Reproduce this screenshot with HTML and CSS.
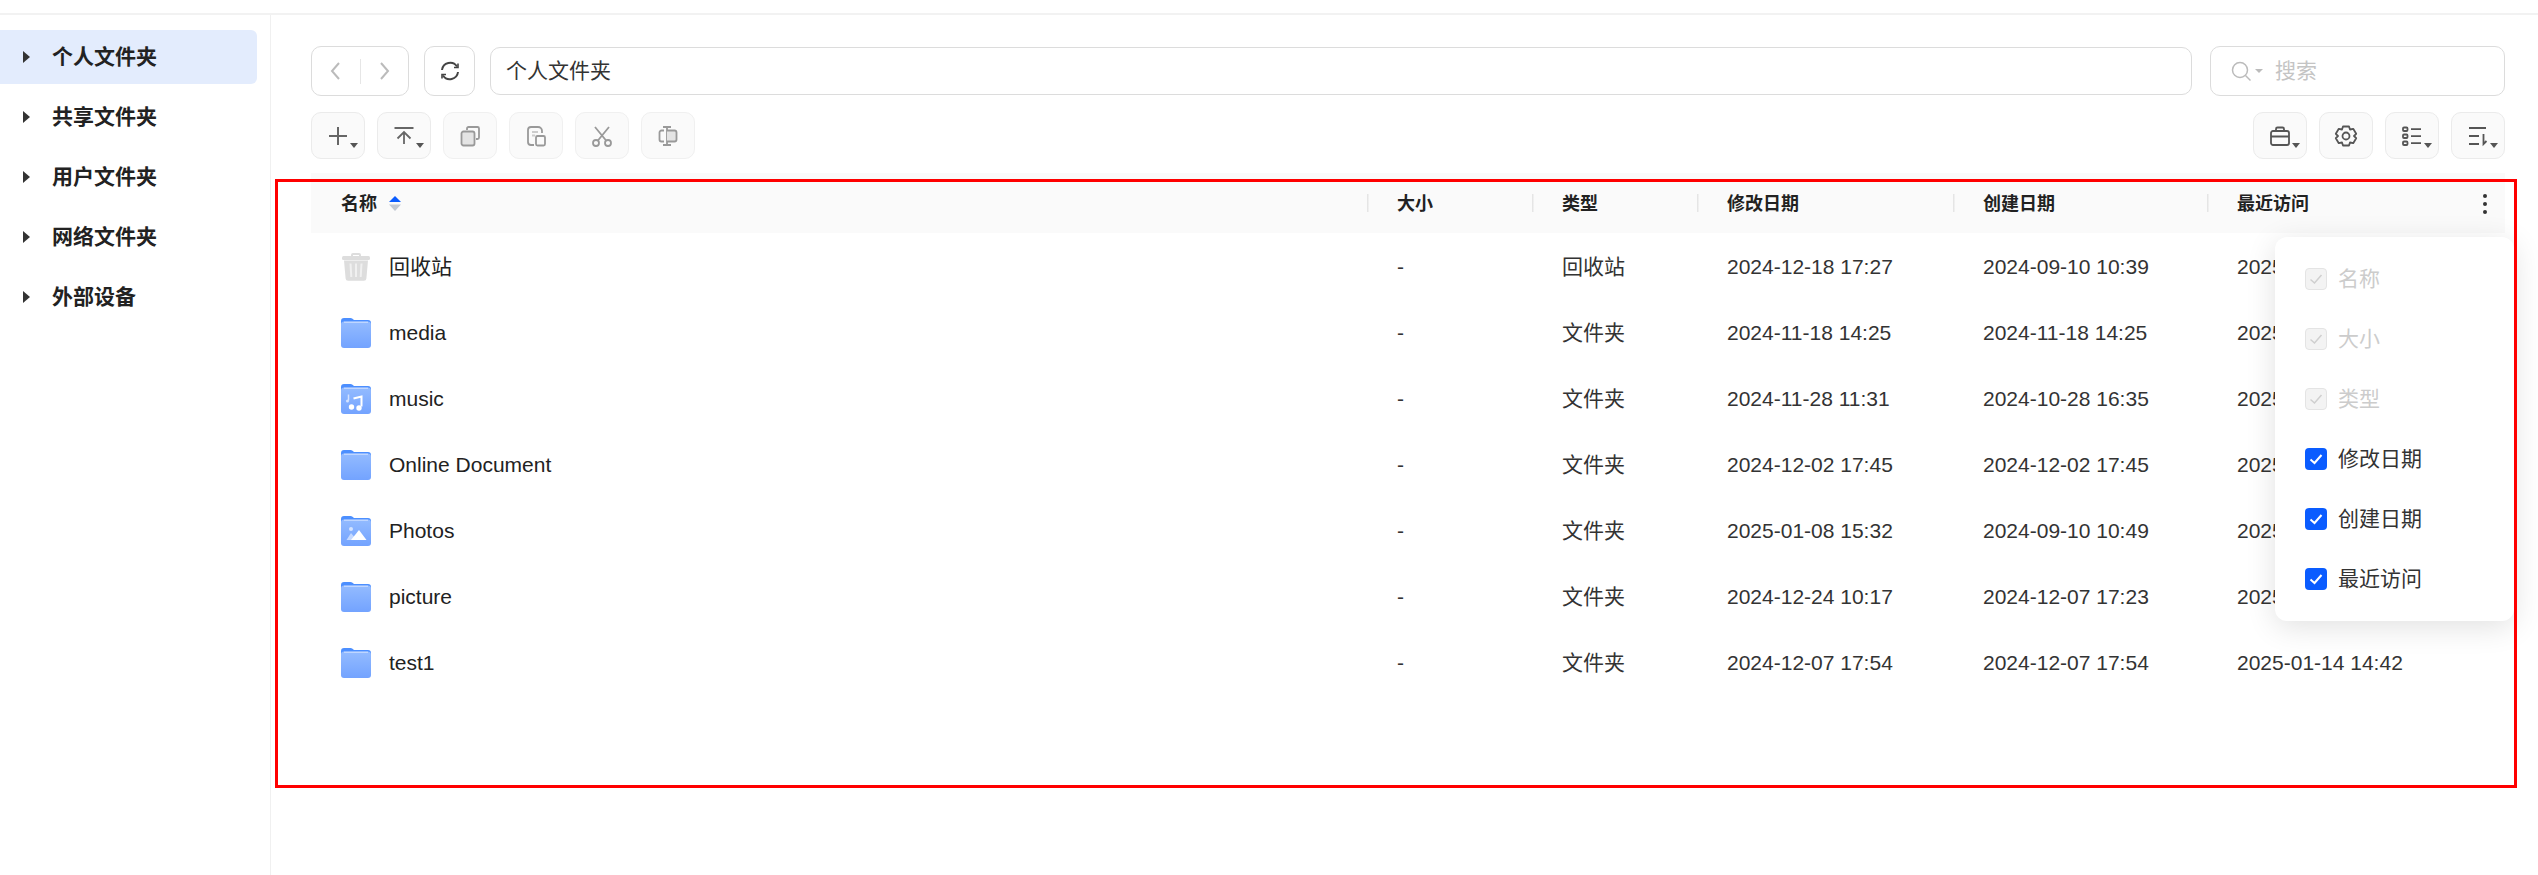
FILE: index.html
```html
<!DOCTYPE html>
<html lang="zh">
<head>
<meta charset="utf-8">
<title>文件管理</title>
<link rel="stylesheet" href="styles.css">
</head>
<body>
<svg class="defs" width="0" height="0" aria-hidden="true">
  <defs>
    <linearGradient id="fg" x1="0" y1="0" x2="0" y2="1"><stop offset="0" stop-color="#93bbff"/><stop offset="1" stop-color="#73a3ff"/></linearGradient>
    <symbol id="folder" viewBox="0 0 30 30">
      <path d="M0 3a3 3 0 0 1 3-3h6.500a3 3 0 0 1 2 .8L13 2h14a3 3 0 0 1 3 3v8H0z" fill="#4c8fff"/>
      <rect y="3.500" width="30" height="26.500" rx="3" fill="url(#fg)"/>
      <path d="M3 4.200h24" stroke="#d4e3ff" stroke-width="1"/>
    </symbol>
  </defs>
</svg>
<div class="topbar"></div>
<div class="app">
  <nav class="sidebar">
    <div class="nav-item active"><i class="nav-caret"></i>个人文件夹</div>
    <div class="nav-item"><i class="nav-caret"></i>共享文件夹</div>
    <div class="nav-item"><i class="nav-caret"></i>用户文件夹</div>
    <div class="nav-item"><i class="nav-caret"></i>网络文件夹</div>
    <div class="nav-item"><i class="nav-caret"></i>外部设备</div>
  </nav>
  <main class="main">
    <div class="pathbar">
      <div class="nav-group">
        <button class="nav-half"><svg width="24" height="24" viewBox="0 0 24 24" fill="none" stroke="#bbb" stroke-width="2"><path d="M15 4l-7 8 7 8"/></svg></button>
        <span class="nav-sep"></span>
        <button class="nav-half"><svg width="24" height="24" viewBox="0 0 24 24" fill="none" stroke="#bbb" stroke-width="2"><path d="M9 4l7 8-7 8"/></svg></button>
      </div>
      <button class="refresh"><svg width="24" height="24" viewBox="0 0 24 24" fill="none" stroke="#444" stroke-width="2"><path d="M4 11a8.200 8.200 0 0 1 15-3.500M20 13a8.200 8.200 0 0 1-15 3.500"/><path d="M20 4.500v4h-4M4 19.500v-4h4" stroke-width="1.600"/></svg></button>
      <div class="address">个人文件夹</div>
      <div class="search">
        <svg width="20" height="20" viewBox="0 0 20 20" fill="none" stroke="#bbb" stroke-width="1.500"><circle cx="9" cy="9" r="7.500"/><path d="M14.500 14.500l5 5"/></svg>
        <i class="search-caret"></i>
        <span>搜索</span>
      </div>
    </div>
    <div class="toolbar">
      <div class="tool-group">
        <button class="tool strong"><svg width="24" height="24" viewBox="0 0 24 24" fill="none" stroke="#666" stroke-width="2"><path d="M12 3v18M3 12h18"/></svg></button>
        <button class="tool strong"><svg width="24" height="24" viewBox="0 0 24 24" fill="none" stroke="#666" stroke-width="1.800"><path d="M2.500 4h19M12 20V8M5.500 14.500L12 8l6.500 6.500"/></svg></button>
        <button class="tool"><svg width="24" height="24" viewBox="0 0 24 24" fill="none" stroke="#999" stroke-width="1.800"><path d="M9 6V4.500A1.500 1.500 0 0 1 10.500 3h9A1.500 1.500 0 0 1 21 4.500v9a1.500 1.500 0 0 1-1.500 1.500H18"/><rect x="3.500" y="7.500" width="13" height="14" rx="2" fill="#e4e4e4"/></svg></button>
        <button class="tool"><svg width="24" height="24" viewBox="0 0 24 24" fill="none" stroke="#999" stroke-width="1.800"><path d="M10 21H7a3 3 0 0 1-3-3V6a3 3 0 0 1 3-3h7a4 4 0 0 1 4 4v2"/><path d="M8 8h6M8 11.500h3" stroke="#ccc"/><rect x="12" y="12" width="9" height="9.500" rx="1.500"/></svg></button>
        <button class="tool"><svg width="24" height="24" viewBox="0 0 24 24" fill="none" stroke="#999" stroke-width="1.800"><path d="M5 3l11.500 14M19 3L7.500 17"/><circle cx="6" cy="19" r="3"/><circle cx="18" cy="19" r="3"/></svg></button>
        <button class="tool"><svg width="24" height="24" viewBox="0 0 24 24" fill="none" stroke="#999" stroke-width="1.800"><path d="M7 3h8M7 21h8M11 3v18"/><path d="M8 6.500H5.500a2 2 0 0 0-2 2v7a2 2 0 0 0 2 2H8"/><path d="M11 6.500h7.500a2 2 0 0 1 2 2v7a2 2 0 0 1-2 2H11" fill="#e4e4e4"/></svg></button>
      </div>
      <div class="tool-group">
        <button class="tool strong"><svg width="24" height="24" viewBox="0 0 24 24" fill="none" stroke="#555" stroke-width="1.800"><rect x="3" y="7" width="18" height="14" rx="2"/><path d="M8 7V5a1.500 1.500 0 0 1 1.500-1.500h5A1.500 1.500 0 0 1 16 5v2M3 12.500h18"/></svg></button>
        <button class="tool plain"><svg width="24" height="24" viewBox="0 0 24 24" fill="none" stroke="#555" stroke-width="1.800"><path d="M9 2.500h6l1 3 3.200-.7 3 5L20 12l2.200 2.200-3 5-3.200-.7-1 3H9l-1-3-3.200.7-3-5L4 12 1.800 9.800l3-5L8 5.500z" stroke-linejoin="round"/><circle cx="12" cy="12" r="3.500"/></svg></button>
        <button class="tool strong"><svg width="24" height="24" viewBox="0 0 24 24" fill="none" stroke="#555" stroke-width="1.800"><rect x="3" y="3.500" width="4.500" height="3.500" rx="1"/><rect x="3" y="10.500" width="4.500" height="3.500" rx="1"/><rect x="3" y="17.500" width="4.500" height="3.500" rx="1"/><path d="M11 5.200h10M11 12.200h10M11 19.200h10"/></svg></button>
        <button class="tool strong"><svg width="24" height="24" viewBox="0 0 24 24" fill="none" stroke="#555" stroke-width="1.800"><path d="M3 4h17M3 12h10M3 20h10M17.500 10v10l3-3"/></svg></button>
      </div>
    </div>
    <div class="table">
      <div class="row head">
        <div class="cell first">名称<svg class="sorter" width="12" height="16" viewBox="0 0 12 16"><path d="M6 0l6 6H0z" fill="#0a5cff"/><path d="M0 8.500h12l-6 6.500z" fill="#c2c8d2"/></svg></div>
        <div class="cell">大小</div>
        <div class="cell">类型</div>
        <div class="cell">修改日期</div>
        <div class="cell">创建日期</div>
        <div class="cell last">最近访问<span class="kebab"><i></i><i></i><i></i></span></div>
      </div>
      <div class="row">
        <div class="cell first"><svg class="file-icon trash" width="30" height="30" viewBox="0 0 30 30"><path d="M11 4V3a1 1 0 0 1 1-1h6a1 1 0 0 1 1 1v1" fill="none" stroke="#ddd" stroke-width="2"/><rect x="1" y="4" width="28" height="4" rx="1.500" fill="#ddd"/><path d="M3 8.500h24l-1.600 18a2.500 2.500 0 0 1-2.500 2.200H7.100a2.500 2.500 0 0 1-2.500-2.200z" fill="#ddd"/><path d="M9.500 11.500l.8 13.500M15 11.500V25M20.500 11.500l-.8 13.500" stroke="#f0f0f0" stroke-width="2"/></svg>回收站</div>
        <div class="cell">-</div><div class="cell">回收站</div><div class="cell">2024-12-18 17:27</div><div class="cell">2024-09-10 10:39</div><div class="cell">2025-01-14 14:42</div>
      </div>
      <div class="row">
        <div class="cell first"><svg class="file-icon" width="30" height="30"><use href="#folder"/></svg>media</div>
        <div class="cell">-</div><div class="cell">文件夹</div><div class="cell">2024-11-18 14:25</div><div class="cell">2024-11-18 14:25</div><div class="cell">2025-01-14 14:42</div>
      </div>
      <div class="row">
        <div class="cell first"><svg class="file-icon" width="30" height="30" viewBox="0 0 30 30"><use href="#folder" width="30" height="30"/><path d="M12.500 14.500l8-2v10" fill="none" stroke="#fff" stroke-width="2"/><circle cx="10.500" cy="23" r="2.700" fill="#fff"/><circle cx="18" cy="24" r="2.700" fill="#fff"/><path d="M7.500 10.500v6" stroke="#d4e3ff" stroke-width="1.500"/><circle cx="6.500" cy="17" r="1.500" fill="#d4e3ff"/></svg>music</div>
        <div class="cell">-</div><div class="cell">文件夹</div><div class="cell">2024-11-28 11:31</div><div class="cell">2024-10-28 16:35</div><div class="cell">2025-01-14 14:42</div>
      </div>
      <div class="row">
        <div class="cell first"><svg class="file-icon" width="30" height="30"><use href="#folder"/></svg>Online Document</div>
        <div class="cell">-</div><div class="cell">文件夹</div><div class="cell">2024-12-02 17:45</div><div class="cell">2024-12-02 17:45</div><div class="cell">2025-01-14 14:42</div>
      </div>
      <div class="row">
        <div class="cell first"><svg class="file-icon" width="30" height="30" viewBox="0 0 30 30"><use href="#folder" width="30" height="30"/><circle cx="10" cy="13" r="2" fill="#d4e3ff"/><path d="M5.500 24l4.500-7 3 3.500V24z" fill="#c5d9ff"/><path d="M10 24l8-10 7.500 10z" fill="#fff"/></svg>Photos</div>
        <div class="cell">-</div><div class="cell">文件夹</div><div class="cell">2025-01-08 15:32</div><div class="cell">2024-09-10 10:49</div><div class="cell">2025-01-14 14:42</div>
      </div>
      <div class="row">
        <div class="cell first"><svg class="file-icon" width="30" height="30"><use href="#folder"/></svg>picture</div>
        <div class="cell">-</div><div class="cell">文件夹</div><div class="cell">2024-12-24 10:17</div><div class="cell">2024-12-07 17:23</div><div class="cell">2025-01-14 14:42</div>
      </div>
      <div class="row">
        <div class="cell first"><svg class="file-icon" width="30" height="30"><use href="#folder"/></svg>test1</div>
        <div class="cell">-</div><div class="cell">文件夹</div><div class="cell">2024-12-07 17:54</div><div class="cell">2024-12-07 17:54</div><div class="cell">2025-01-14 14:42</div>
      </div>
      <div class="column-menu">
        <div class="menu-item disabled"><span class="check"><svg width="14" height="14" viewBox="0 0 14 14"><path d="M1.500 7.500l4 3.500 7-8"/></svg></span>名称</div>
        <div class="menu-item disabled"><span class="check"><svg width="14" height="14" viewBox="0 0 14 14"><path d="M1.500 7.500l4 3.500 7-8"/></svg></span>大小</div>
        <div class="menu-item disabled"><span class="check"><svg width="14" height="14" viewBox="0 0 14 14"><path d="M1.500 7.500l4 3.500 7-8"/></svg></span>类型</div>
        <div class="menu-item"><span class="check"><svg width="14" height="14" viewBox="0 0 14 14"><path d="M1.500 7.500l4 3.500 7-8"/></svg></span>修改日期</div>
        <div class="menu-item"><span class="check"><svg width="14" height="14" viewBox="0 0 14 14"><path d="M1.500 7.500l4 3.500 7-8"/></svg></span>创建日期</div>
        <div class="menu-item"><span class="check"><svg width="14" height="14" viewBox="0 0 14 14"><path d="M1.500 7.500l4 3.500 7-8"/></svg></span>最近访问</div>
      </div>
    </div>
  </main>
</div>
<div class="annotation"></div>
</body>
</html>
```
FILE: styles.css
```css
* { box-sizing: border-box; }
html, body { margin: 0; height: 100%; overflow: hidden; background: #fff; }
body {
  font-family: "Liberation Sans", "Noto Sans CJK SC", sans-serif;
  font-size: 21px;
  line-height: 28px;
  color: #333;
  position: relative;
}
i { display: block; }
button { padding: 0; margin: 0; font: inherit; cursor: pointer; }
.defs { position: absolute; }

.topbar { height: 15px; border-bottom: 2px solid #f2f2f2; }
.app { display: flex; height: 860px; }

.sidebar {
  width: 271px;
  flex: none;
  padding-top: 15px;
  border-right: 1px solid #f0f0f0;
  display: flex;
  flex-direction: column;
  gap: 6px;
}
.nav-item {
  width: 257px;
  height: 54px;
  display: flex;
  align-items: center;
  padding-left: 23px;
  font-weight: 700;
  color: #222;
  border-radius: 0 6px 6px 0;
}
.nav-item.active { background: #e3ecfd; }
.nav-caret {
  width: 0; height: 0;
  margin-right: 22px;
  border-left: 7px solid #333;
  border-top: 6px solid transparent;
  border-bottom: 6px solid transparent;
}

.main { flex: 1; min-width: 0; padding: 31px 33px 0 40px; }

.pathbar { display: flex; height: 50px; align-items: center; }
.nav-group {
  width: 98px; height: 50px;
  display: flex; align-items: center;
  border: 1.5px solid #dcdcdc; border-radius: 10px;
}
.nav-half { flex: 1; height: 100%; border: 0; background: none; display: flex; align-items: center; justify-content: center; }
.nav-sep { width: 1px; height: 25px; background: #e6e6e6; }
.refresh {
  width: 51px; height: 50px; margin-left: 15px;
  display: flex; align-items: center; justify-content: center;
  background: #fff; border: 1.5px solid #dcdcdc; border-radius: 10px;
}
.address {
  flex: 1; height: 48px; margin-left: 15px;
  display: flex; align-items: center; padding-left: 15px;
  border: 1.5px solid #dcdcdc; border-radius: 10px;
  color: #333;
}
.search {
  width: 295px; height: 50px; margin-left: 18px;
  display: flex; align-items: center; padding-left: 20px;
  border: 1.5px solid #dcdcdc; border-radius: 10px;
  color: #c4c4c4;
}
.search-caret {
  width: 0; height: 0; margin: 0 12px 0 4px;
  border-top: 4px solid #bbb;
  border-left: 4px solid transparent;
  border-right: 4px solid transparent;
}

.toolbar { display: flex; justify-content: space-between; margin-top: 16px; height: 47px; }
.tool-group { display: flex; gap: 12px; }
.tool {
  width: 54px; height: 47px;
  display: flex; align-items: center; justify-content: center;
  background: #fafafa;
  border: 1.5px solid #f0f0f0;
  border-radius: 10px;
  position: relative;
}
.tool.strong { border-color: #ebebeb; }
.tool.plain { border-color: #ebebeb; }
.tool.strong::after {
  content: "";
  position: absolute;
  right: 6px; top: 30px;
  border-top: 5px solid #555;
  border-left: 4px solid transparent;
  border-right: 4px solid transparent;
}

.table { position: relative; margin-top: 14px; }
.row {
  display: grid;
  grid-template-columns: 1056px 165px 165px 256px 254px 298px;
  height: 66px;
  align-items: center;
  color: #333;
}
.cell { padding-left: 30px; padding-top: 2px; display: flex; align-items: center; white-space: nowrap; height: 100%; }
.cell.first { color: #222; }
.file-icon { margin-right: 18px; flex: none; }
.head {
  height: 60px;
  background: #fafafa;
  font-size: 18px;
  font-weight: 700;
  color: #222;
}
.head .cell {
  background: linear-gradient(#e5e5e5, #e5e5e5) left center / 1.5px 18px no-repeat;
}
.head .cell.first { background: none; }
.sorter { margin-left: 12px; }
.last { justify-content: space-between; padding-right: 18px; }
.kebab { display: flex; flex-direction: column; gap: 4px; }
.kebab i { width: 4px; height: 4px; border-radius: 50%; background: #333; }

.column-menu {
  position: absolute;
  top: 64px;
  right: -9px;
  width: 239px;
  padding: 12px 0;
  background: #fff;
  border-radius: 12px;
  box-shadow: 0 6px 30px rgba(0, 0, 0, 0.12);
}
.menu-item { height: 60px; display: flex; align-items: center; padding-left: 30px; color: #333; }
.check {
  width: 22px; height: 22px; margin-right: 11px;
  display: flex; align-items: center; justify-content: center;
  background: #0a5cff;
  border-radius: 4px;
}
.check path { fill: none; stroke: #fff; stroke-width: 2; }
.menu-item.disabled { color: #ccc; }
.disabled .check { background: #f3f3f3; border: 1px solid #e4e4e4; }
.disabled .check path { stroke: #cfcfcf; stroke-width: 1.500; }

.annotation {
  position: absolute;
  left: 275px; top: 179px;
  width: 2242px; height: 609px;
  border: 3px solid #ff0000;
  pointer-events: none;
}
```
